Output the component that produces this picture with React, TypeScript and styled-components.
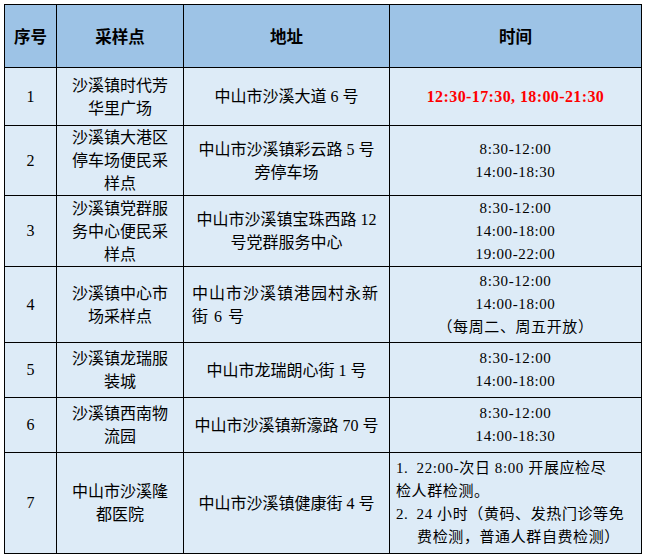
import React from 'react';
import styled, { createGlobalStyle } from 'styled-components';

const GlobalStyle = createGlobalStyle`
  html, body {
    margin: 0;
    padding: 0;
    background: #ffffff;
  }
  body {
    font-family: "Liberation Serif", "Noto Sans CJK SC", serif;
  }
`;

const Page = styled.div`
  padding: 4px;
`;

const Table = styled.table`
  border-collapse: collapse;
  table-layout: fixed;
  width: 638px;
  font-size: 16px;
  color: #000;
`;

const Row = styled.tr<{ $h: number }>`
  height: ${(p) => p.$h}px;
`;

const HeadCell = styled.th`
  background: #9dc3e6;
  border: 1px solid #000;
  font-weight: bold;
  font-size: 16.5px;
  text-align: center;
  vertical-align: middle;
  padding: 0;
`;

const Cell = styled.td<{ $align?: 'left' | 'center'; $spread?: boolean }>`
  background: #ddebf7;
  border: 1px solid #000;
  text-align: ${(p) => p.$align || 'center'};
  vertical-align: middle;
  padding: 0 0 0 ${(p) => (p.$align === 'left' ? 8 : 0)}px;
  letter-spacing: ${(p) => (p.$spread ? '1px' : 'normal')};
`;

const TimeCell = styled(Cell)`
  font-size: 15px;
  letter-spacing: 0.6px;
  padding-left: ${(p) => (p.$align === 'left' ? 6 : 0)}px;
`;

const Line = styled.div<{ $align?: 'left' | 'center' }>`
  line-height: 23px;
  white-space: nowrap;
  text-align: ${(p) => p.$align || 'inherit'};
`;

const Red = styled.span`
  color: #ff0000;
  font-weight: bold;
  font-size: 16px;
  letter-spacing: 0.4px;
`;

type Site = {
  no: string;
  name: string[];
  addr: string[];
  addrAlign?: 'left' | 'center';
  time: React.ReactNode[];
  timeAlign?: 'left' | 'center';
  h: number;
};

const sp = '\u2002';

const sites: Site[] = [
  {
    no: '1',
    name: ['沙溪镇时代芳', '华里广场'],
    addr: ['中山市沙溪大道 6 号'],
    time: [<Red key="r">12:30-17:30, 18:00-21:30</Red>],
    h: 58,
  },
  {
    no: '2',
    name: ['沙溪镇大港区', '停车场便民采', '样点'],
    addr: ['中山市沙溪镇彩云路 5 号', '旁停车场'],
    time: ['8:30-12:00', '14:00-18:30'],
    h: 70,
  },
  {
    no: '3',
    name: ['沙溪镇党群服', '务中心便民采', '样点'],
    addr: ['中山市沙溪镇宝珠西路 12', '号党群服务中心'],
    time: ['8:30-12:00', '14:00-18:00', '19:00-22:00'],
    h: 71,
  },
  {
    no: '4',
    name: ['沙溪镇中心市', '场采样点'],
    addr: ['中山市沙溪镇港园村永新', '街 6 号'],
    addrAlign: 'left',
    time: ['8:30-12:00', '14:00-18:00', '（每周二、周五开放）'],
    h: 76,
  },
  {
    no: '5',
    name: ['沙溪镇龙瑞服', '装城'],
    addr: ['中山市龙瑞朗心街 1 号'],
    time: ['8:30-12:00', '14:00-18:00'],
    h: 55,
  },
  {
    no: '6',
    name: ['沙溪镇西南物', '流园'],
    addr: ['中山市沙溪镇新濠路 70 号'],
    time: ['8:30-12:00', '14:00-18:30'],
    h: 55,
  },
  {
    no: '7',
    name: ['中山市沙溪隆', '都医院'],
    addr: ['中山市沙溪镇健康街 4 号'],
    time: [
      `1.${sp}22:00-次日 8:00 开展应检尽`,
      '检人群检测。',
      `2.${sp}24 小时（黄码、发热门诊等免`,
      <Line key="c" $align="center">费检测，普通人群自费检测）</Line>,
    ],
    timeAlign: 'left',
    h: 101,
  },
];

const renderLines = (lines: React.ReactNode[]) =>
  lines.map((l, i) =>
    React.isValidElement(l) && l.type === Line ? l : <Line key={i}>{l}</Line>
  );

const App: React.FC = () => {
  return (
    <React.Fragment>
      <GlobalStyle />
      <Page>
        <Table>
          <colgroup>
            <col style={{ width: 52 }} />
            <col style={{ width: 127 }} />
            <col style={{ width: 206 }} />
            <col style={{ width: 252 }} />
          </colgroup>
          <thead>
            <Row $h={63}>
              <HeadCell>序号</HeadCell>
              <HeadCell>采样点</HeadCell>
              <HeadCell>地址</HeadCell>
              <HeadCell>时间</HeadCell>
            </Row>
          </thead>
          <tbody>
            {sites.map((s) => (
              <Row key={s.no} $h={s.h}>
                <Cell>{s.no}</Cell>
                <Cell>{renderLines(s.name)}</Cell>
                <Cell $align={s.addrAlign} $spread={s.addrAlign === 'left'}>
                  {renderLines(s.addr)}
                </Cell>
                <TimeCell $align={s.timeAlign}>{renderLines(s.time)}</TimeCell>
              </Row>
            ))}
          </tbody>
        </Table>
      </Page>
    </React.Fragment>
  );
};

export default App;
